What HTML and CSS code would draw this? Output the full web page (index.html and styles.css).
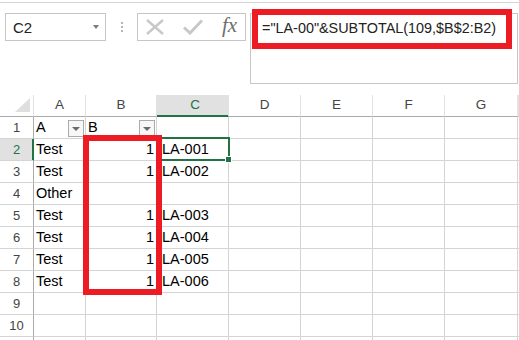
FILE: index.html
```html
<!DOCTYPE html>
<html lang="en">
<head>
  <meta charset="UTF-8">
  <title>Subtotal numbering</title>
  <link rel="stylesheet" href="styles.css">
</head>
<body>
  <div class="top-rule"></div>

  <div class="toolbar">
    <div class="name-box">
      <span>C2</span>
      <span class="name-arrow"></span>
    </div>
    <div class="grip"><i></i><i></i><i></i></div>
    <div class="btn-box">
      <svg class="icon-cancel" width="18" height="16" viewBox="0 0 18 16">
        <path d="M1 1 L17 15 M17 1 L1 15" stroke="#c8c8c8" stroke-width="2.4" fill="none"/>
      </svg>
      <svg class="icon-enter" width="20" height="16" viewBox="0 0 20 16">
        <path d="M1 8.5 L7 14 L19 1.5" stroke="#c8c8c8" stroke-width="3" fill="none"/>
      </svg>
      <span class="fx">fx</span>
    </div>
    <div class="formula-box">
      <div class="formula-text">="LA-00"&amp;SUBTOTAL(109,$B$2:B2)</div>
      <div class="mark mark-formula"></div>
    </div>
  </div>

  <div class="sheet">
    <div class="row head">
      <div class="cell corner"><span class="corner-tri"></span></div>
      <div class="cell">A</div>
      <div class="cell">B</div>
      <div class="cell sel">C</div>
      <div class="cell">D</div>
      <div class="cell">E</div>
      <div class="cell">F</div>
      <div class="cell">G</div>
      <div class="cell"></div>
    </div>
    <div class="row">
      <div class="cell rh">1</div>
      <div class="cell filter-cell">A<span class="filter-btn"></span></div>
      <div class="cell filter-cell">B<span class="filter-btn"></span></div>
      <div class="cell"></div><div class="cell"></div><div class="cell"></div><div class="cell"></div><div class="cell"></div><div class="cell"></div>
    </div>
    <div class="row">
      <div class="cell rh sel">2</div>
      <div class="cell">Test</div>
      <div class="cell num">1</div>
      <div class="cell">LA-001</div>
      <div class="cell"></div><div class="cell"></div><div class="cell"></div><div class="cell"></div><div class="cell"></div>
    </div>
    <div class="row">
      <div class="cell rh">3</div>
      <div class="cell">Test</div>
      <div class="cell num">1</div>
      <div class="cell">LA-002</div>
      <div class="cell"></div><div class="cell"></div><div class="cell"></div><div class="cell"></div><div class="cell"></div>
    </div>
    <div class="row">
      <div class="cell rh">4</div>
      <div class="cell">Other</div>
      <div class="cell num"></div>
      <div class="cell"></div>
      <div class="cell"></div><div class="cell"></div><div class="cell"></div><div class="cell"></div><div class="cell"></div>
    </div>
    <div class="row">
      <div class="cell rh">5</div>
      <div class="cell">Test</div>
      <div class="cell num">1</div>
      <div class="cell">LA-003</div>
      <div class="cell"></div><div class="cell"></div><div class="cell"></div><div class="cell"></div><div class="cell"></div>
    </div>
    <div class="row">
      <div class="cell rh">6</div>
      <div class="cell">Test</div>
      <div class="cell num">1</div>
      <div class="cell">LA-004</div>
      <div class="cell"></div><div class="cell"></div><div class="cell"></div><div class="cell"></div><div class="cell"></div>
    </div>
    <div class="row">
      <div class="cell rh">7</div>
      <div class="cell">Test</div>
      <div class="cell num">1</div>
      <div class="cell">LA-005</div>
      <div class="cell"></div><div class="cell"></div><div class="cell"></div><div class="cell"></div><div class="cell"></div>
    </div>
    <div class="row">
      <div class="cell rh">8</div>
      <div class="cell">Test</div>
      <div class="cell num">1</div>
      <div class="cell">LA-006</div>
      <div class="cell"></div><div class="cell"></div><div class="cell"></div><div class="cell"></div><div class="cell"></div>
    </div>
    <div class="row">
      <div class="cell rh">9</div>
      <div class="cell"></div><div class="cell"></div><div class="cell"></div><div class="cell"></div><div class="cell"></div><div class="cell"></div><div class="cell"></div><div class="cell"></div>
    </div>
    <div class="row">
      <div class="cell rh">10</div>
      <div class="cell"></div><div class="cell"></div><div class="cell"></div><div class="cell"></div><div class="cell"></div><div class="cell"></div><div class="cell"></div><div class="cell"></div>
    </div>
    <div class="row">
      <div class="cell rh"></div>
      <div class="cell"></div><div class="cell"></div><div class="cell"></div><div class="cell"></div><div class="cell"></div><div class="cell"></div><div class="cell"></div><div class="cell"></div>
    </div>

    <div class="active-cell"><span class="fill-handle"></span></div>
    <div class="mark mark-column"></div>
  </div>
</body>
</html>
```

FILE: styles.css
```css
body {
  margin: 0;
  padding: 0;
  font-family: "Liberation Sans", Arial, sans-serif;
  background: #fff;
  overflow: hidden;
}

.top-rule {
  margin-top: 2px;
  border-top: 1px solid #d5d5d5;
}

/* formula bar */
.toolbar {
  display: flex;
  align-items: flex-start;
  padding: 10px 0 0 5px;
}

.name-box {
  box-sizing: border-box;
  width: 101px;
  height: 28px;
  border: 1px solid #c6c6c6;
  display: flex;
  align-items: center;
  padding-left: 7px;
  font-size: 15px;
  color: #222;
}

.name-arrow {
  margin-left: auto;
  margin-right: 6px;
  border-left: 3.5px solid transparent;
  border-right: 3.5px solid transparent;
  border-top: 4px solid #7a7a7a;
}

.grip {
  display: flex;
  flex-direction: column;
  gap: 2px;
  margin: 9px 0 0 15px;
}

.grip i {
  width: 2px;
  height: 2px;
  background: #b4b4b4;
}

.btn-box {
  box-sizing: border-box;
  width: 109px;
  height: 28px;
  margin-left: 14px;
  border: 1px solid #c6c6c6;
  display: flex;
  align-items: center;
  padding-left: 8px;
}

.icon-enter {
  margin-left: 19px;
}

.fx {
  margin-left: 19px;
  font-family: "Liberation Serif", "Times New Roman", serif;
  font-style: italic;
  font-size: 21px;
  color: #6e6e6e;
  margin-top: -3px;
}

.formula-box {
  position: relative;
  box-sizing: border-box;
  width: 268px;
  height: 71px;
  margin-left: 4px;
  border: 1px solid #c6c6c6;
  padding: 4px 0 0 11px;
}

.formula-text {
  font-size: 14.4px;
  line-height: 20px;
  color: #222;
  white-space: nowrap;
}

.mark {
  position: absolute;
  box-sizing: border-box;
  border: 6px solid #ed1c24;
}

.mark-formula {
  left: 1px;
  top: -5px;
  width: 260px;
  height: 40px;
}

/* sheet grid */
.sheet {
  position: relative;
  margin-top: 11px;
}

.row {
  display: grid;
  grid-template-columns: 34px 52px 71px 72px 72px 72px 72px 73px 1fr;
  height: 22px;
}

.cell {
  box-sizing: border-box;
  border-right: 1px solid #d4d4d4;
  border-bottom: 1px solid #d4d4d4;
  font-size: 14.5px;
  line-height: 21px;
  padding-left: 2px;
  color: #000;
  white-space: nowrap;
  overflow: hidden;
}

.cell.num {
  text-align: right;
  padding-right: 2px;
}

.row .cell:nth-child(4) {
  padding-left: 5px;
}

.head .cell {
  border-right-color: #e2e2e2;
  border-bottom-color: #ababab;
  font-size: 13.5px;
  line-height: 19px;
  text-align: center;
  padding-left: 0;
  color: #444;
}

.head .cell.sel {
  background: #e1e1e1;
  color: #217346;
  border-bottom-color: #217346;
  box-shadow: inset 0 -1px 0 #217346;
}

.corner {
  position: relative;
}

.corner-tri {
  position: absolute;
  right: 3px;
  bottom: 4px;
  border-left: 15px solid transparent;
  border-bottom: 14px solid #dfdfdf;
}

.cell.rh {
  border-right-color: #ababab;
  font-size: 13px;
  text-align: center;
  padding-left: 0;
  color: #444;
}

.cell.rh.sel {
  background: #e1e1e1;
  color: #217346;
  border-right-color: #217346;
  box-shadow: inset -1px 0 0 #217346;
}

.filter-cell {
  display: flex;
  align-items: flex-start;
}

.filter-btn {
  box-sizing: border-box;
  width: 16px;
  height: 17px;
  margin: 3px 1px 0 auto;
  border: 1px solid #ababab;
  background: #f7f7f7;
  position: relative;
}

.filter-btn::after {
  content: "";
  position: absolute;
  left: 3px;
  top: 6px;
  border-left: 4px solid transparent;
  border-right: 4px solid transparent;
  border-top: 4px solid #6a6a6a;
}

.active-cell {
  position: absolute;
  box-sizing: border-box;
  left: 156px;
  top: 42px;
  width: 74px;
  height: 24px;
  border: 2px solid #217346;
}

.fill-handle {
  position: absolute;
  right: -4px;
  bottom: -4px;
  width: 5px;
  height: 5px;
  background: #217346;
  border: 1px solid #fff;
}

.mark-column {
  left: 83px;
  top: 40px;
  width: 79px;
  height: 160px;
}
```
